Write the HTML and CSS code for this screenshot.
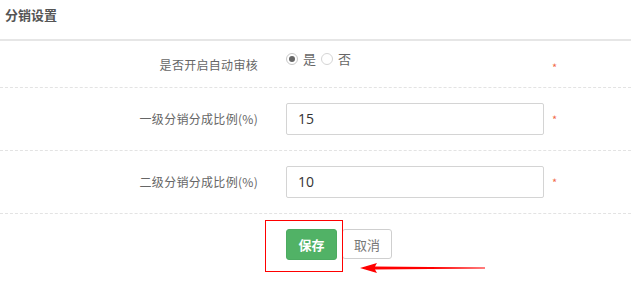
FILE: index.html
```html
<!DOCTYPE html>
<html lang="zh">
<head>
<meta charset="utf-8">
<link rel="stylesheet" href="styles.css">
</head>
<body>
<div class="page">
  <div class="header">分销设置</div>
  <div class="row row-radio">
    <div class="label">是否开启自动审核</div>
    <div class="control radios">
      <span class="radio checked"></span><span class="rtext">是</span>
      <span class="radio"></span><span class="rtext">否</span>
    </div>
    <span class="star">*</span>
  </div>
  <div class="row">
    <div class="label">一级分销分成比例(%)</div>
    <div class="control"><div class="input">15</div></div>
    <span class="star">*</span>
  </div>
  <div class="row">
    <div class="label">二级分销分成比例(%)</div>
    <div class="control"><div class="input">10</div></div>
    <span class="star">*</span>
  </div>
  <div class="actions">
    <button class="btn btn-save">保存</button>
    <button class="btn btn-cancel">取消</button>
  </div>
  <div class="highlight"></div>
  <svg class="arrow" width="130" height="12" viewBox="0 0 130 12">
    <polygon points="0,6 17,1 15,4.5 125,5.6 125,6.4 15,7.5 17,11" fill="#ff0000"/>
  </svg>
</div>
</body>
</html>
```
FILE: styles.css
```css
html, body {
  margin: 0;
  padding: 0;
  background: #fff;
}
.page {
  position: relative;
  width: 631px;
  height: 286px;
  font-family: "Noto Sans CJK SC", "Noto Sans", sans-serif;
  color: #666;
}
.header {
  height: 41px;
  box-sizing: border-box;
  padding: 6px 0 0 5px;
  font-size: 13px;
  font-weight: bold;
  color: #555;
  line-height: 18px;
  border-bottom: 2px solid #e6e6e6;
}
.row {
  display: flex;
  align-items: center;
  padding: 15px 0;
  border-bottom: 1px dashed #e3e3e3;
}
.row-radio {
  height: 47px;
  box-sizing: border-box;
  padding: 9px 0 0 0;
  align-items: flex-start;
}
.label {
  width: 258px;
  text-align: right;
  font-size: 12px;
  color: #666;
  line-height: 16px;
  letter-spacing: 0.3px;
}
.row-radio .label {
  margin-top: 7px;
}
.control {
  width: 258px;
  margin-left: 28px;
}
.radios {
  display: flex;
  align-items: center;
  height: 18px;
  font-size: 13px;
  color: #666;
}
.radio {
  width: 12px;
  height: 12px;
  box-sizing: border-box;
  border: 1px solid #d5d5d5;
  border-radius: 50%;
  display: inline-block;
  position: relative;
}
.radio.checked {
  border-color: #c8c8c8;
}
.radio.checked::after {
  content: "";
  position: absolute;
  left: 2px;
  top: 2px;
  width: 6px;
  height: 6px;
  border-radius: 50%;
  background: #666;
}
.rtext {
  margin-left: 5px;
  margin-right: 5px;
  line-height: 18px;
}
.star {
  margin-left: 8px;
  color: #f26a4b;
  font-size: 11px;
  line-height: 10px;
}
.row-radio .star {
  margin-top: 12px;
}
.input {
  height: 32px;
  box-sizing: border-box;
  border: 1px solid #d4d4d4;
  border-radius: 2px;
  padding: 0 11px;
  font-family: "Open Sans", "Noto Sans", sans-serif;
  font-size: 14px;
  line-height: 30px;
  color: #333;
}
.actions {
  display: flex;
  gap: 5px;
  padding: 15px 0 0 286px;
}
.btn {
  font-family: "Noto Sans CJK SC", sans-serif;
  font-size: 13px;
  border-radius: 3px;
  padding: 0;
  margin: 0;
  cursor: pointer;
}
.btn-save {
  width: 51px;
  height: 31px;
  background: #51b266;
  border: 1px solid #4cab61;
  color: #fff;
  font-weight: bold;
}
.btn-cancel {
  width: 50px;
  height: 30px;
  background: #fff;
  border: 1px solid #cfcfcf;
  color: #777;
}
.highlight {
  position: absolute;
  left: 265px;
  top: 220px;
  width: 78px;
  height: 52px;
  box-sizing: border-box;
  border: 1px solid #ff0000;
}
.arrow {
  position: absolute;
  left: 360px;
  top: 262px;
}
```
